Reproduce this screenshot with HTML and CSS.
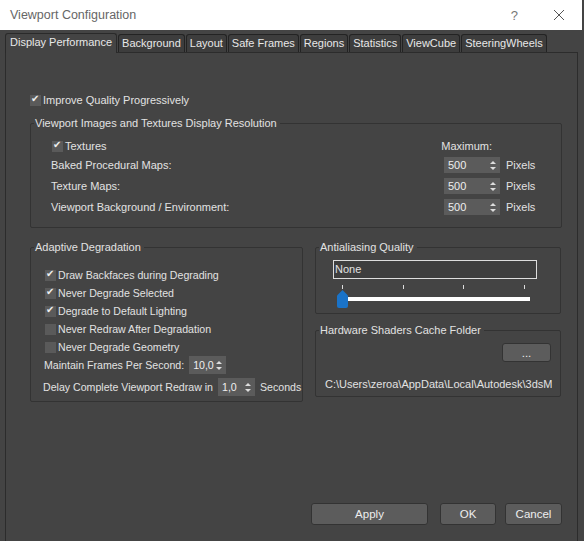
FILE: index.html
```html
<!DOCTYPE html>
<html>

<head>
    <meta charset="UTF-8">
    <title>Viewport Configuration</title>
    <link rel="stylesheet" href="styles.css">
</head>

<body>
    <div class="dialog">
        <div class="titlebar">
            <span class="title">Viewport Configuration</span>
            <span class="help">?</span>
            <svg class="close" width="12" height="12" viewBox="0 0 12 12">
                <path d="M1 1 L11 11 M11 1 L1 11" stroke="#555" stroke-width="1" fill="none" />
            </svg>
        </div>

        <!-- tabs -->
        <div class="tabs">
            <div class="tab active">Display Performance</div>
            <div class="tab">Background</div>
            <div class="tab">Layout</div>
            <div class="tab">Safe Frames</div>
            <div class="tab">Regions</div>
            <div class="tab">Statistics</div>
            <div class="tab">ViewCube</div>
            <div class="tab">SteeringWheels</div>
        </div>

        <div class="pane">
            <label class="check top-check"><span class="box on"></span>Improve Quality Progressively</label>

            <fieldset class="group res">
                <legend>Viewport Images and Textures Display Resolution</legend>
                <div class="inner">
                    <div class="res-head">
                        <label class="check"><span class="box on"></span>Textures</label>
                        <span class="max">Maximum:</span>
                    </div>
                    <div class="res-row">
                        <span class="res-label">Baked Procedural Maps:</span>
                        <span class="spin wide">500<i class="arrows"></i></span>
                        <span class="unit">Pixels</span>
                    </div>
                    <div class="res-row">
                        <span class="res-label">Texture Maps:</span>
                        <span class="spin wide">500<i class="arrows"></i></span>
                        <span class="unit">Pixels</span>
                    </div>
                    <div class="res-row">
                        <span class="res-label">Viewport Background / Environment:</span>
                        <span class="spin wide">500<i class="arrows"></i></span>
                        <span class="unit">Pixels</span>
                    </div>
                </div>
            </fieldset>

            <div class="columns">
                <fieldset class="group adaptive">
                    <legend>Adaptive Degradation</legend>
                    <div class="inner">
                        <label class="check first"><span class="box on"></span>Draw Backfaces during Degrading</label>
                        <label class="check"><span class="box on"></span>Never Degrade Selected</label>
                        <label class="check"><span class="box on"></span>Degrade to Default Lighting</label>
                        <label class="check"><span class="box"></span>Never Redraw After Degradation</label>
                        <label class="check"><span class="box"></span>Never Degrade Geometry</label>
                        <div class="field fps">
                            <span>Maintain Frames Per Second:</span>
                            <span class="spin small">10,0<i class="arrows"></i></span>
                        </div>
                        <div class="field delay">
                            <span>Delay Complete Viewport Redraw in</span>
                            <span class="spin small">1,0<i class="arrows"></i></span>
                            <span>Seconds</span>
                        </div>
                    </div>
                </fieldset>

                <div class="right-col">
                    <fieldset class="group aa">
                        <legend>Antialiasing Quality</legend>
                        <div class="inner">
                            <div class="combo">None</div>
                            <div class="ticks"><i></i><i></i><i></i><i></i></div>
                            <div class="slider">
                                <span class="thumb"></span>
                                <span class="track"></span>
                            </div>
                        </div>
                    </fieldset>

                    <fieldset class="group cache">
                        <legend>Hardware Shaders Cache Folder</legend>
                        <div class="inner">
                            <div class="browse-row"><button class="btn browse">...</button></div>
                            <div class="path">C:\Users\zeroa\AppData\Local\Autodesk\3dsMax</div>
                        </div>
                    </fieldset>
                </div>
            </div>

            <div class="actions">
                <button class="btn apply">Apply</button>
                <button class="btn ok">OK</button>
                <button class="btn cancel">Cancel</button>
            </div>
        </div>
    </div>
</body>

</html>
```

FILE: styles.css
```css
* {
    margin: 0;
    padding: 0;
    box-sizing: border-box;
}

body {
    font-family: 'Liberation Sans', Arial, sans-serif;
    font-size: 11px;
    color: #e2e2e2;
    background-color: #444;
    width: 584px;
    height: 541px;
    overflow: hidden;
}

.dialog {
    height: 541px;
    display: flex;
    flex-direction: column;
}

.titlebar {
    height: 30px;
    background-color: #fff;
    display: flex;
    align-items: center;
    padding-left: 10px;
    margin-right: 2px;
}

.title {
    font-size: 12.5px;
    color: #666;
    flex: 1;
}

.help {
    font-size: 13px;
    color: #777;
    margin-right: 35px;
}

.close {
    margin-right: 17px;
}

/* tabs */
.tabs {
    display: flex;
    padding-left: 5px;
    margin-top: 3px;
    height: 19px;
    align-items: flex-end;
}

.tab {
    height: 18px;
    padding: 0 3px;
    line-height: 17px;
    font-size: 11px;
    background-color: #3d3d3d;
    border: 1px solid #232323;
    border-bottom: none;
    border-radius: 3px 3px 0 0;
    margin-right: 1px;
    color: #e8e8e8;
}

.tab.active {
    height: 20px;
    padding: 0 4px;
    background-color: #444;
    border-color: #2a2a2a;
    margin-bottom: -1px;
    position: relative;
}

.pane {
    flex: 1;
    margin: 0 6px 0 5px;
    border: 1px solid #2c2c2c;
    border-bottom: none;
    padding: 0 15px 0 24px;
}

/* checkboxes */
.check {
    display: flex;
    align-items: center;
    height: 18px;
    white-space: nowrap;
}

.box {
    width: 11px;
    height: 11px;
    background-color: #5a5a5a;
    margin-right: 2px;
    position: relative;
}

.box.on::after {
    content: "\2714";
    position: absolute;
    left: 1px;
    top: -2px;
    font-size: 10px;
    color: #eee;
}

.top-check {
    margin-top: 38px;
}

/* group boxes */
.group {
    border: 1px solid #333;
    border-radius: 2px;
    padding: 0;
    min-width: 0;
}

.group legend {
    padding: 0 3px 0 1px;
    margin-left: 3px;
    font-size: 11px;
}

.res {
    margin-top: 8px;
    height: 111px;
}

.res .inner {
    padding-left: 20px;
}

.res-head {
    display: flex;
    justify-content: space-between;
    padding-right: 69px;
    margin-top: 9px;
    height: 16px;
}

.res-head .check {
    height: 16px;
    margin-left: 1px;
}

.max {
    line-height: 16px;
}

.res-row {
    display: flex;
    align-items: center;
    height: 20px;
    margin-top: 1px;
}

.res-label {
    width: 393px;
}

.unit {
    margin-left: 6px;
}

/* spinners */
.spin {
    display: inline-flex;
    align-items: center;
    justify-content: space-between;
    height: 16px;
    background-color: #5b5b5b;
    padding: 0 4px 0 4px;
    color: #eee;
}

.spin.wide {
    width: 56px;
}

.spin.small {
    width: 37px;
    height: 18px;
}

.arrows {
    width: 6px;
    height: 9px;
    position: relative;
}

.arrows::before,
.arrows::after {
    content: "";
    position: absolute;
    left: 0;
    border-left: 3px solid transparent;
    border-right: 3px solid transparent;
}

.arrows::before {
    top: 0;
    border-bottom: 3px solid #ddd;
}

.arrows::after {
    bottom: 0;
    border-top: 3px solid #ddd;
}

/* two columns */
.columns {
    display: flex;
    gap: 12px;
    margin-top: 13px;
}

.adaptive {
    width: 273px;
    height: 161px;
}

.adaptive .inner {
    padding-left: 14px;
    font-size: 10.6px;
}

.adaptive .check.first {
    margin-top: 13px;
}

.field {
    display: flex;
    align-items: center;
    gap: 5px;
    white-space: nowrap;
}

.fps {
    margin-left: -1px;
    height: 18px;
}

.delay {
    margin-left: -2px;
    margin-top: 4px;
    height: 18px;
}

.right-col {
    width: 246px;
    display: flex;
    flex-direction: column;
    gap: 10px;
}

.aa {
    height: 73px;
}

.aa .inner {
    padding-left: 17px;
}

.combo {
    width: 204px;
    height: 19px;
    border: 1px solid #ddd;
    background-color: #3e3e3e;
    line-height: 17px;
    padding-left: 1px;
    margin-top: 7px;
}

.ticks {
    display: flex;
    justify-content: space-between;
    width: 183px;
    margin-left: 9px;
    margin-top: 6px;
    height: 4px;
}

.ticks i {
    width: 1px;
    height: 4px;
    background-color: #ddd;
}

.slider {
    display: flex;
    align-items: center;
    margin-left: 4px;
    margin-top: 1px;
    height: 18px;
}

.thumb {
    width: 11px;
    height: 18px;
    background-color: #1a73c8;
    clip-path: polygon(50% 0, 100% 30%, 100% 100%, 0 100%, 0 30%);
    border-radius: 0 0 2px 2px;
}

.track {
    width: 182px;
    height: 4px;
    background-color: #fff;
}

.cache {
    height: 73px;
    overflow: hidden;
}

.cache .inner {
    padding-left: 9px;
}

.browse-row {
    display: flex;
    justify-content: flex-end;
    padding-right: 9px;
    margin-top: 7px;
}

.path {
    white-space: nowrap;
    overflow: hidden;
    width: 227px;
    margin-top: 16px;
    font-size: 11px;
}

/* buttons */
.btn {
    font-family: 'Liberation Sans', Arial, sans-serif;
    font-size: 11.5px;
    color: #eee;
    background-color: #5c5c5c;
    border: 1px solid #333;
    border-radius: 3px;
    height: 22px;
}

.browse {
    width: 49px;
    height: 19px;
}

.actions {
    display: flex;
    justify-content: flex-end;
    margin-top: 101px;
}

.apply {
    width: 117px;
    margin-right: 12px;
}

.ok {
    width: 56px;
    margin-right: 9px;
}

.cancel {
    width: 57px;
}
```
